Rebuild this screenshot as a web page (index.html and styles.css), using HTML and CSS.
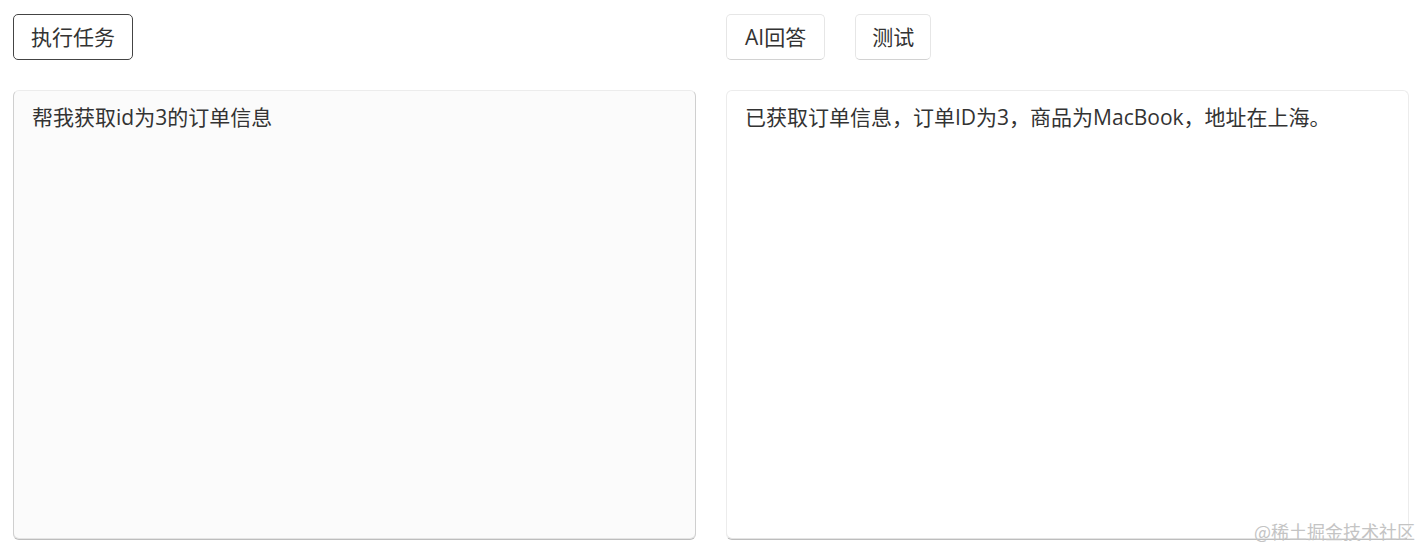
FILE: index.html
```html
<!DOCTYPE html>
<html lang="zh-CN">
<head>
    <meta charset="UTF-8">
    <title>AI任务</title>
    <link rel="stylesheet" href="styles.css">
</head>
<body>
<div class="page">
    <div class="column">
        <div class="toolbar">
            <button class="btn btn-dark">执行任务</button>
        </div>
        <div class="panel panel-input">帮我获取id为3的订单信息</div>
    </div>
    <div class="column">
        <div class="toolbar">
            <button class="btn btn-wide">AI回答</button>
            <button class="btn">测试</button>
        </div>
        <div class="panel">已获取订单信息，订单ID为3，商品为MacBook，地址在上海。</div>
    </div>
</div>
<div class="watermark">@稀土掘金技术社区</div>
</body>
</html>
```

FILE: styles.css
```css
body {
    margin: 0;
    font-family: "Open Sans", "Noto Sans CJK SC", sans-serif;
    background: #fff;
    color: #333;
    overflow: hidden;
}
.page {
    display: grid;
    grid-template-columns: 683px 683px;
    gap: 30px;
    padding: 14px 10px 0 13px;
}
.column {
    display: flex;
    flex-direction: column;
    gap: 30px;
}
.toolbar {
    display: flex;
    gap: 30px;
    height: 46px;
}
.btn {
    font-family: inherit;
    font-size: 21px;
    color: #333;
    background: #fff;
    border: 1px solid #e6e6e6;
    border-bottom-color: #d2d2d2;
    border-radius: 5px;
    padding: 0 16px;
    height: 46px;
    line-height: 44px;
}
.btn-wide {
    padding: 0 18px;
}
.btn-dark {
    border: 1px solid #444;
    width: 120px;
    padding: 0;
}
.panel {
    box-sizing: border-box;
    height: 450px;
    padding: 12px 18px;
    font-size: 21px;
    line-height: 28px;
    background: #fff;
    border: 1px solid #ececec;
    border-bottom-color: #bdbdbd;
    border-radius: 6px;
    box-shadow: inset 0 -1px 0 #e4e4e4;
}
.panel-input {
    background: #fbfbfb;
    border-left-color: #cfcfcf;
    border-right-color: #cfcfcf;
}
.watermark {
    position: absolute;
    right: 4px;
    bottom: 6px;
    font-family: "Noto Sans CJK SC", sans-serif;
    font-size: 18px;
    color: #c4c4c4;
}
```
